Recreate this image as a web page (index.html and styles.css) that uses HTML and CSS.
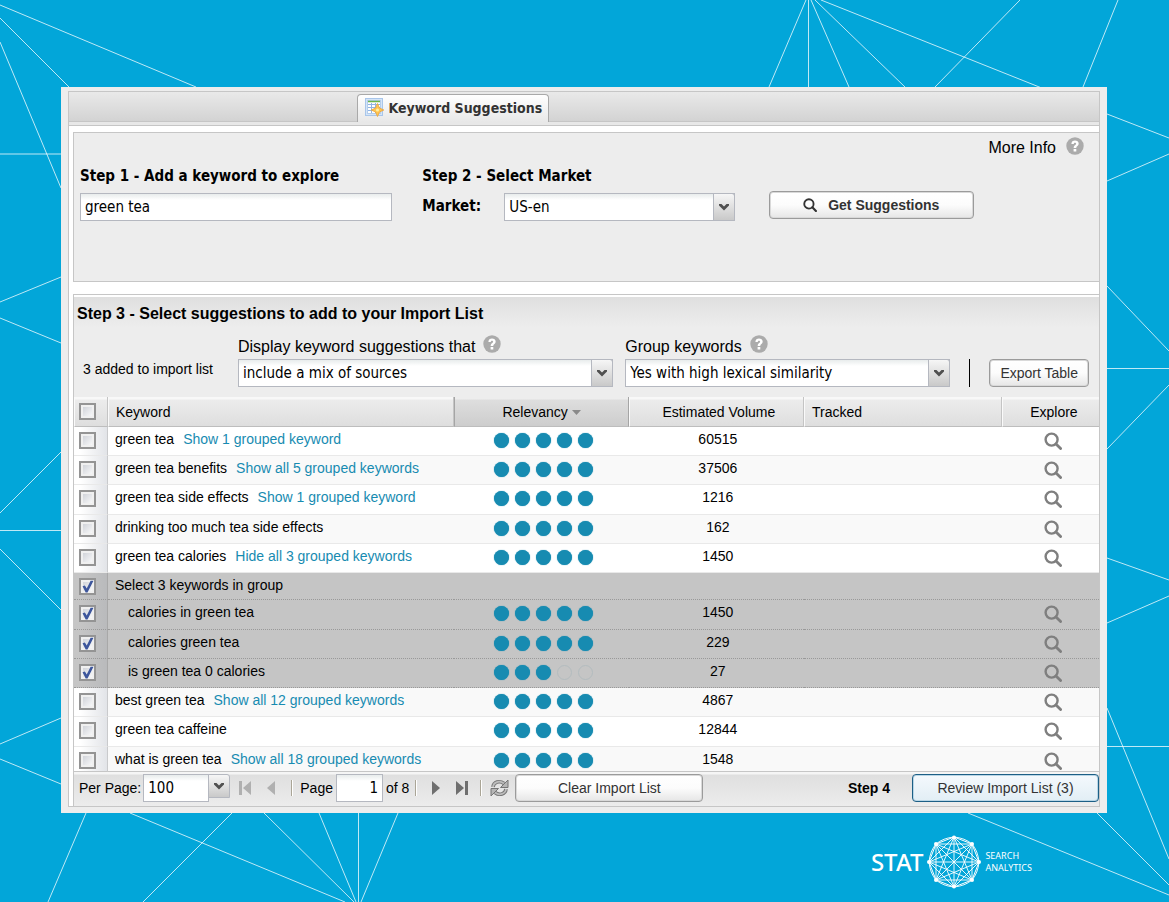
FILE: index.html
```html
<!DOCTYPE html>
<html lang="en">
<head>
<meta charset="utf-8">
<meta name="viewport" content="width=device-width, initial-scale=1">
<title>Keyword Suggestions</title>
<link rel="stylesheet" href="styles.css">
</head>
<body>
<svg class="backdrop" viewBox="0 0 1169 902" preserveAspectRatio="xMidYMid slice" aria-hidden="true">
  <path d="M0 5L196 87M0 18L69 87M0 42L61 188M0 154H61M61 277L0 302M0 318L61 343M61 452L0 513M0 530.5H61M0 549L61 610M61 718L0 744M0 759L61 784M86 813L48 902M130 813L345 902M232 813L143 902M264 813L354 902M319 813L356 902M358.5 813V902M398 813L361 902M806 0L769 87M808.5 0V87M811 0L849 87M815 0L905 87M821 0L1107 114L1169 138M1020 0L935 87M1118 0L1083 87M1107 181L1169 154M1107 286L1169 351M1107 368.5H1169M1107 449L1169 385M1107 558L1169 580M1107 623L1169 596M1107 708L1169 859M1107 746.5H1169M968 813L1169 895M1097 813L1169 885"/>
</svg>
<svg class="symbols" aria-hidden="true">
  <symbol id="help" viewBox="0 0 18 18"><circle cx="9" cy="9" r="8.7" fill="#ababab"/><path d="M5.4 7C5.4 4.600 7 3.500 9 3.500s3.700 1.100 3.700 3.200c0 2.200-2.500 2.400-2.500 4.200H7.700c0-2.700 2.400-2.800 2.400-4.100 0-.6-.4-1-1.100-1-.8 0-1.200.5-1.200 1.300zM7.600 11.900h2.700v2.500H7.600z" fill="#fff"/></symbol>
  <symbol id="search" viewBox="0 0 18 18"><circle cx="7.600" cy="7.600" r="6" fill="none" stroke="currentColor" stroke-width="2.400"/><path d="M12 12l4.600 4.600" stroke="currentColor" stroke-width="2.800" stroke-linecap="round"/></symbol>
  <symbol id="chevron" viewBox="0 0 12 8"><path d="M1 1h2.500L6 3.500 8.500 1H11v1.500L6 7.500 1 2.500z" fill="#505050"/></symbol>
</svg>

<main class="window">
  <div class="frame">
    <nav class="tabbar">
      <button class="tab" type="button">
        <svg width="19" height="19" viewBox="0 0 19 19" aria-hidden="true"><rect x=".5" y=".5" width="17" height="17" fill="#d3e4f8" stroke="#a9c6ea"/><rect x="2.500" y="2.500" width="13" height="13" fill="#fff" stroke="#b4cdeb"/><path d="M3 3.500h12" stroke="#6cb64a" stroke-width="1.500"/><path d="M3 6.500h12M3 9.500h12M3 12.500h12M6.500 5v10M10.500 5v10" stroke="#91b4e4"/><path d="M12.500 5.500l2 4.500 4.300 2-4.300 2-2 4.500-2-4.500L6.200 12l4.300-2z" fill="#ffc552" stroke="#eba43a" stroke-width=".8"/><circle cx="12.500" cy="12" r="1.500" fill="#fff2a8"/></svg>
        <span>Keyword Suggestions</span>
      </button>
    </nav>
    <div class="content">
      <section class="explore">
        <div class="more"><span>More Info</span><svg class="help"><use href="#help"/></svg></div>
        <div class="steps">
          <div class="step">
            <label class="step-title" for="kw">Step 1 - Add a keyword to explore</label>
            <input class="field" id="kw" type="text" value="green tea">
          </div>
          <div class="step">
            <h2 class="step-title">Step 2 - Select Market</h2>
            <div class="market">
              <label class="market-label" for="market">Market:</label>
              <span class="combo"><select class="field" id="market"><option>US-en</option></select><span class="trigger"><svg class="chevron"><use href="#chevron"/></svg></span></span>
            </div>
          </div>
          <button class="btn btn-strong" type="button"><svg class="glass-small"><use href="#search"/></svg>Get Suggestions</button>
        </div>
      </section>

      <section class="suggest">
        <h2 class="suggest-title">Step 3 - Select suggestions to add to your Import List</h2>
        <div class="filters">
          <p class="count">3 added to import list</p>
          <div class="filter filter-source">
            <div class="filter-head"><label for="source">Display keyword suggestions that</label><svg class="help"><use href="#help"/></svg></div>
            <span class="combo"><select class="field" id="source"><option>include a mix of sources</option></select><span class="trigger"><svg class="chevron"><use href="#chevron"/></svg></span></span>
          </div>
          <div class="filter filter-group">
            <div class="filter-head"><label for="group">Group keywords</label><svg class="help"><use href="#help"/></svg></div>
            <span class="combo"><select class="field" id="group"><option>Yes with high lexical similarity</option></select><span class="trigger"><svg class="chevron"><use href="#chevron"/></svg></span></span>
          </div>
          <span class="rule"></span>
          <button class="btn btn-export" type="button">Export Table</button>
        </div>

        <table class="grid">
          <colgroup><col class="c-check"><col class="c-key"><col class="c-rel"><col class="c-vol"><col class="c-track"><col class="c-exp"></colgroup>
          <thead>
            <tr>
              <th class="check"><input type="checkbox" aria-label="Select all"></th>
              <th>Keyword</th>
              <th class="sorted">Relevancy <svg class="sort" width="9" height="5" viewBox="0 0 9 5"><path d="M0 0h9L4.500 5z" fill="#8a8a8a"/></svg></th>
              <th class="vol">Estimated Volume</th>
              <th>Tracked</th>
              <th class="exp">Explore</th>
            </tr>
          </thead>
          <tbody>
            <tr><td class="check"><input type="checkbox" aria-label="green tea"></td><td>green tea<a href="#">Show 1 grouped keyword</a></td><td class="rel"><span class="dots"><i></i><i></i><i></i><i></i><i></i></span></td><td class="vol">60515</td><td></td><td class="exp"><svg class="glass"><use href="#search"/></svg></td></tr>
            <tr class="alt"><td class="check"><input type="checkbox" aria-label="green tea benefits"></td><td>green tea benefits<a href="#">Show all 5 grouped keywords</a></td><td class="rel"><span class="dots"><i></i><i></i><i></i><i></i><i></i></span></td><td class="vol">37506</td><td></td><td class="exp"><svg class="glass"><use href="#search"/></svg></td></tr>
            <tr class="tall"><td class="check"><input type="checkbox" aria-label="green tea side effects"></td><td>green tea side effects<a href="#">Show 1 grouped keyword</a></td><td class="rel"><span class="dots"><i></i><i></i><i></i><i></i><i></i></span></td><td class="vol">1216</td><td></td><td class="exp"><svg class="glass"><use href="#search"/></svg></td></tr>
            <tr class="alt"><td class="check"><input type="checkbox" aria-label="drinking too much tea side effects"></td><td>drinking too much tea side effects</td><td class="rel"><span class="dots"><i></i><i></i><i></i><i></i><i></i></span></td><td class="vol">162</td><td></td><td class="exp"><svg class="glass"><use href="#search"/></svg></td></tr>
            <tr><td class="check"><input type="checkbox" aria-label="green tea calories"></td><td>green tea calories<a href="#">Hide all 3 grouped keywords</a></td><td class="rel"><span class="dots"><i></i><i></i><i></i><i></i><i></i></span></td><td class="vol">1450</td><td></td><td class="exp"><svg class="glass"><use href="#search"/></svg></td></tr>
            <tr class="picked group-head"><td class="check"><input type="checkbox" checked aria-label="Select 3 keywords in group"></td><td>Select 3 keywords in group</td><td></td><td></td><td></td><td></td></tr>
            <tr class="picked child tall"><td class="check"><input type="checkbox" checked aria-label="calories in green tea"></td><td>calories in green tea</td><td class="rel"><span class="dots"><i></i><i></i><i></i><i></i><i></i></span></td><td class="vol">1450</td><td></td><td class="exp"><svg class="glass"><use href="#search"/></svg></td></tr>
            <tr class="picked child"><td class="check"><input type="checkbox" checked aria-label="calories green tea"></td><td>calories green tea</td><td class="rel"><span class="dots"><i></i><i></i><i></i><i></i><i></i></span></td><td class="vol">229</td><td></td><td class="exp"><svg class="glass"><use href="#search"/></svg></td></tr>
            <tr class="picked child"><td class="check"><input type="checkbox" checked aria-label="is green tea 0 calories"></td><td>is green tea 0 calories</td><td class="rel"><span class="dots"><i></i><i></i><i></i><i class="off"></i><i class="off"></i></span></td><td class="vol">27</td><td></td><td class="exp"><svg class="glass"><use href="#search"/></svg></td></tr>
            <tr class="alt"><td class="check"><input type="checkbox" aria-label="best green tea"></td><td>best green tea<a href="#">Show all 12 grouped keywords</a></td><td class="rel"><span class="dots"><i></i><i></i><i></i><i></i><i></i></span></td><td class="vol">4867</td><td></td><td class="exp"><svg class="glass"><use href="#search"/></svg></td></tr>
            <tr class="tall"><td class="check"><input type="checkbox" aria-label="green tea caffeine"></td><td>green tea caffeine</td><td class="rel"><span class="dots"><i></i><i></i><i></i><i></i><i></i></span></td><td class="vol">12844</td><td></td><td class="exp"><svg class="glass"><use href="#search"/></svg></td></tr>
            <tr class="alt last"><td class="check"><input type="checkbox" aria-label="what is green tea"></td><td>what is green tea<a href="#">Show all 18 grouped keywords</a></td><td class="rel"><span class="dots"><i></i><i></i><i></i><i></i><i></i></span></td><td class="vol">1548</td><td></td><td class="exp"><svg class="glass"><use href="#search"/></svg></td></tr>
          </tbody>
        </table>

        <div class="pager">
          <label for="per">Per Page:</label>
          <span class="combo combo-small"><select class="field" id="per"><option>100</option></select><span class="trigger"><svg class="chevron"><use href="#chevron"/></svg></span></span>
          <button class="nav nav-first dim" type="button" aria-label="First page"><svg width="14" height="16" viewBox="0 0 14 16"><path d="M1 1h3v14H1zM13 1v14L5 8z" fill="currentColor"/></svg></button>
          <button class="nav nav-prev dim" type="button" aria-label="Previous page"><svg width="14" height="16" viewBox="0 0 14 16"><path d="M11 1v14L3 8z" fill="currentColor"/></svg></button>
          <span class="bar"></span>
          <label class="page-label" for="page">Page</label>
          <input class="field page" id="page" type="text" value="1">
          <span class="of">of 8</span>
          <span class="bar bar-tight"></span>
          <button class="nav nav-next" type="button" aria-label="Next page"><svg width="14" height="16" viewBox="0 0 14 16"><path d="M3 1v14l8-7z" fill="currentColor"/></svg></button>
          <button class="nav" type="button" aria-label="Last page"><svg width="14" height="16" viewBox="0 0 14 16"><path d="M1 1v14l8-7zM10 1h3v14h-3z" fill="currentColor"/></svg></button>
          <span class="bar bar-wide"></span>
          <button class="nav" type="button" aria-label="Refresh"><svg width="19" height="18" viewBox="0 0 19 18"><g fill="none"><path d="M3 8C3.500 3 9.500 1 14 4.500M16 10c-.5 5-6.500 7-11 3.500" stroke="#757575" stroke-width="3.600"/><path d="M3 8C3.500 3 9.500 1 14 4.500M16 10c-.5 5-6.500 7-11 3.500" stroke="#bdbdbd" stroke-width="1.800"/></g><path d="M18 1v7.500h-7.500zM1 17V9.500h7.500z" fill="#b5b5b5" stroke="#757575"/></svg></button>
          <button class="btn btn-clear" type="button">Clear Import List</button>
          <strong class="step4">Step 4</strong>
          <button class="btn btn-review" type="button">Review Import List (3)</button>
        </div>
      </section>
    </div>
  </div>
</main>

<footer class="brand">
  <span class="brand-name">STAT</span>
  <svg width="54" height="54" viewBox="0 0 54 54" aria-hidden="true"><g fill="none" stroke="#fff" stroke-width=".9"><path stroke-width="1" d="M27 2L45 9 52 27 45 45 27 52 9 45 2 27 9 9z"/><path d="M27 2L52 27 27 52 2 27zM45 9V45H9V9zM27 2L45 45 2 27 45 9 27 52 9 9 52 27 9 45zM27 2V52M2 27H52M9 9L45 45M45 9L9 45"/><path d="M27 2Q38 3 45 9 51 16 52 27 51 38 45 45 38 51 27 52 16 51 9 45 3 38 2 27 3 16 9 9 16 3 27 2"/></g><g fill="#fff"><circle cx="27" cy="2.500" r="2"/><circle cx="45" cy="9" r="2"/><circle cx="52" cy="27" r="2"/><circle cx="45" cy="45" r="2"/><circle cx="27" cy="51.500" r="2"/><circle cx="9" cy="45" r="2"/><circle cx="2" cy="27" r="2"/><circle cx="9" cy="9" r="2"/></g></svg>
  <span class="brand-sub"><span>SEARCH</span><span>ANALYTICS</span></span>
</footer>
</body>
</html>
```
FILE: styles.css
```css
* { box-sizing: border-box; }

body {
  margin: 0;
  padding: 87px 62px 12px 61px;
  background: #02a6d9;
  color: #000;
  font: 14px/20px "Liberation Sans", Arial, sans-serif;
}

h2, p { margin: 0; }
button, input, select { font: inherit; color: inherit; }
svg { flex: none; }

.backdrop { position: absolute; inset: 0; z-index: -1; width: 100%; height: 100%; fill: none; stroke: #fff; stroke-opacity: .75; stroke-width: 1; }
.symbols { display: none; }
.help { width: 18px; height: 18px; }
.chevron { width: 12px; height: 8px; }
.glass { width: 18px; height: 18px; color: #7f7f7f; }
.glass-small { width: 14px; height: 14px; color: #333; }

.window { padding: 4px 7px 6px; background: #ededed; }
.frame { border: 1px solid #c6c6c6; background: #fff; }

.tabbar { display: flex; padding: 2px 0 0 28%; height: 34px; border-bottom: 1px solid #c6c6c6; background: linear-gradient(#e9e9e9, #d3d3d3 29px, #c6c6c6 29px, #c6c6c6 30px, #e8e8e8 30px); }
.tab { display: flex; align-items: center; gap: 4px; height: 28px; padding: 0 6px 2px 7px; border: 1px solid #a9a9a9; border-bottom: 0; border-radius: 4px 4px 0 0; background: linear-gradient(#fff, #e8e8e8); color: #333; font: bold 14px/20px "DejaVu Sans Condensed", "Noto Sans", sans-serif; }

.content { padding: 6px 0 0 4px; }

.explore { height: 150px; border: 1px solid #c6c6c6; border-right: 0; background: #ededed; }
.more { display: flex; justify-content: flex-end; gap: 10px; padding: 4px 15px 0 0; font-size: 16px; line-height: 22px; }
.steps { display: grid; grid-template-columns: 312fr 312fr 209fr 95fr; column-gap: 30px; padding: 6px 0 0 6px; }
.step { display: flex; flex-direction: column; gap: 6px; }
.step-title, .market-label { font: bold 15px/22px "DejaVu Sans Condensed", "Noto Sans", sans-serif; }
.market { display: flex; }
.market-label { flex: 0 0 82px; line-height: 26px; }

.field { width: 100%; height: 28px; padding: 0 4px; border: 1px solid #b5b8c0; border-radius: 0; outline: 0; background: linear-gradient(#e8ecec, #fff 6px); font: 15px/20px "DejaVu Sans Condensed", "Noto Sans", sans-serif; appearance: none; }
.combo { position: relative; display: block; flex: 1; }
.trigger { position: absolute; top: 0; right: 0; display: flex; align-items: center; justify-content: center; width: 22px; height: 28px; border: 1px solid #b5b8c0; border-radius: 0 3px 0 0; background: linear-gradient(#f6f6f6, #c9c9c9); pointer-events: none; }

.btn { display: flex; align-items: center; justify-content: center; height: 28px; padding: 0 10px; border: 1px solid #9b9b9b; border-radius: 4px; background: linear-gradient(#fff, #fcfcfc 50%, #e6e6e6); box-shadow: inset 0 0 0 1px #d9d9d9; color: #333; white-space: nowrap; }
.btn-strong { align-self: end; gap: 11px; margin: 0 0 2px 4px; font-weight: bold; }

.suggest { margin-top: 12px; border-top: 1px solid #c6c6c6; border-left: 1px solid #c6c6c6; background: linear-gradient(#fff 2px, #dfdfdf 2px, #ededed 32px); }
.suggest-title { padding: 8px 3px 0; font-size: 16px; line-height: 22px; }
.filters { display: flex; align-items: flex-end; padding: 10px 10px 10px 9px; }
.count { flex: 0 0 155px; line-height: 36px; }
.filter-source { flex: 375; margin-right: 12px; }
.filter-group { flex: 325; }
.filter-head { display: flex; gap: 8px; font-size: 16px; line-height: 24px; }
.rule { width: 1px; height: 28px; margin: 0 19px; background: #000; }

.grid { width: 100%; border-spacing: 0; table-layout: fixed; background: #fff; }
.c-check { width: 34px; }
.c-key { width: 33.8%; }
.c-rel { width: 17%; }
.c-vol { width: 17.1%; }
.c-track { width: 19.3%; }
.grid th { height: 30px; padding: 0 7px; border-right: 1px solid #c4c4c4; border-bottom: 1px solid #bdbdbd; border-left: 1px solid #fafafa; background: linear-gradient(#f8f8f8 2px, #ececec 3px, #dedede); font-weight: normal; text-align: left; }
.grid th.sorted { border-right-color: #a5a5a5; border-left-color: #a5a5a5; background: linear-gradient(#ededed 2px, #dedede 3px, #cdcdcd); text-align: center; }
.sort { margin-bottom: 2px; }
.grid td { height: 29px; padding: 2px 8px 0 7px; border-bottom: 1px solid #e9e9e9; vertical-align: top; white-space: nowrap; }
.grid .alt td { background: #f9f9f9; }
.grid .tall td { height: 30px; }
.grid .last td { height: 25px; border-bottom-color: #c6c6c6; }
.grid td.check { padding: 5px 0 0 5px; border-right: 1px solid #c9cacc; background: linear-gradient(90deg, #fff 20%, #e2e4e8); line-height: 0; }
.grid th.check { padding: 0 0 0 4px; line-height: 0; }
.grid th.vol { text-align: center; padding-left: 12px; }
.grid td.vol { text-align: center; padding-left: 11px; }
.grid .exp { padding-right: 0; padding-left: 6px; border-right: 0; text-align: center; }
.grid td.exp { padding-top: 5px; line-height: 0; }
.grid td.rel { padding-top: 6px; text-align: center; }
.grid a { margin-left: 9px; color: #178bb1; text-decoration: none; }
.grid .picked td { border-bottom: 1px dotted #999; background: #c5c5c5; }
.grid .picked td.check { border-right-color: #a8a8a8; background: linear-gradient(90deg, #c5c5c5 20%, #b9babc); }
.grid .group-head td { height: 27px; }
.grid .child td:nth-child(2) { padding-left: 20px; }

.dots { display: flex; justify-content: center; gap: 6px; padding-left: 5px; }
.dots i { width: 15px; height: 15px; border-radius: 50%; background: #178bb1; box-shadow: 0 0 1px #178bb1; }
.dots .off { border: 1px solid #b3bcbf; background: none; box-shadow: none; }

input[type="checkbox"] { position: relative; width: 17px; height: 17px; margin: 0; border: 2px solid #949494; background: linear-gradient(135deg, #c9ccd3, #fff); box-shadow: inset 0 0 0 2px #f0f0f0; appearance: none; }
input[type="checkbox"]:checked::after { content: ""; position: absolute; inset: 0; background: #3d569c; clip-path: polygon(12% 48%, 30% 42%, 44% 66%, 74% 6%, 96% 6%, 50% 96%, 36% 96%); }

.pager { display: flex; align-items: flex-start; height: 34px; padding: 2px 0 0 5px; background: linear-gradient(#f5f5f5 2px, #dfdfdf 3px, #ececec); line-height: 28px; white-space: nowrap; }
.combo-small { flex: 0 0 87px; margin: 0 8px 0 2px; }
.combo-small .field { width: 66px; }
.combo-small .trigger { height: 24px; }
.nav { display: flex; align-items: center; height: 28px; margin: 0 0 0 12px; padding: 0; border: 0; background: none; color: #6f6f6f; }
.nav.dim { color: #b0b0b0; }
.nav-first { margin-left: 0; }
.bar { width: 2px; height: 16px; margin: 6px 7px 0 13px; border-left: 1px solid #aaa596; background: #fff; }
.bar-tight { margin: 6px 0 0 6px; }
.bar-wide { margin: 6px 0 0 11px; }
.nav-next { margin-left: 12px; }
.bar-wide + .nav { margin-left: 8px; }
.page { flex: none; width: 47px; margin: 0 3px; text-align: right; }
.btn-clear { flex: 0 0 188px; margin-left: 6px; }
.step4 { margin: 0 22px 0 auto; }
.btn-review { flex: 0 0 187px; border-color: #1c5f86; background: linear-gradient(#f4f9fd, #e2eef5); box-shadow: inset 0 0 0 1px #b9d6e6; }

.brand { display: flex; align-items: center; justify-content: flex-end; gap: 4px; margin-top: 22px; padding-right: 75px; color: #fff; }
.brand-name { font: 500 24px/28px "Noto Sans", sans-serif; }
.brand-sub { display: grid; font: 9px/12px "Noto Sans", sans-serif; }
```
